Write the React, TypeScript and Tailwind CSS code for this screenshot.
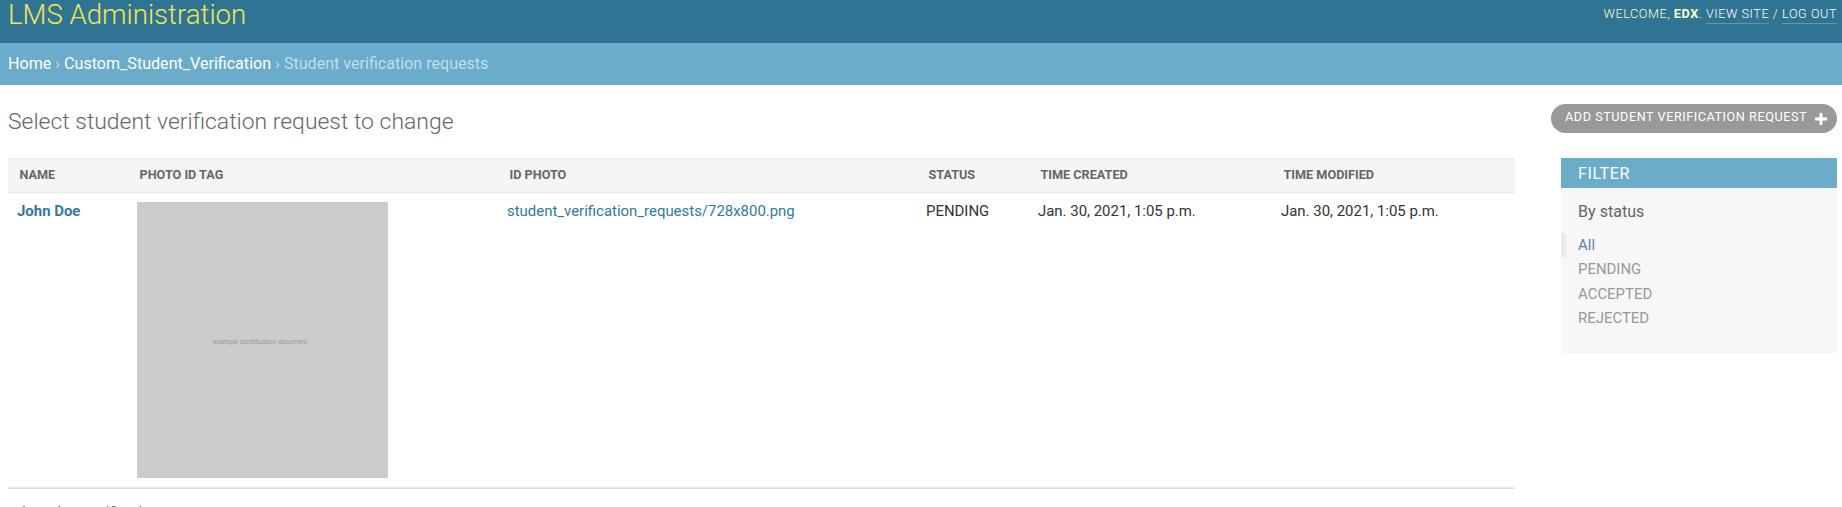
const columns = [
  { label: 'Name', width: 'w-[120px]' },
  { label: 'Photo ID tag', width: 'w-[370px]' },
  { label: 'ID photo', width: 'w-[419px]' },
  { label: 'Status', width: 'w-[112px]' },
  { label: 'Time created', width: 'w-[243px]' },
  { label: 'Time modified', width: 'w-[243px]' },
];

const filters = ['All', 'PENDING', 'ACCEPTED', 'REJECTED'];

const cell = 'border-b border-[#eaeaea] px-[9px] pt-[9px]';

function Header() {
  return (
    <header className="flex h-[43px] items-start justify-between bg-[#2f7493] pl-2 pr-[5px]">
      <h1 className="-mt-px text-[27.6px] leading-[32px] font-light text-[#f0e55a]">LMS Administration</h1>
      <div className="pt-[5px] text-[12.65px] leading-[18px] font-light tracking-[0.56px] whitespace-pre text-[#ffffcc] uppercase">
        Welcome, <strong className="font-bold">edx</strong>.{' '}
        <a className="inline-block h-[19px] border-b border-white/25 text-white">View site</a> /{' '}
        <a className="inline-block h-[19px] border-b border-white/25 text-white">Log out</a>
      </div>
    </header>
  );
}

function Breadcrumbs() {
  return (
    <nav className="flex h-[42px] items-center gap-1 bg-[#6aacca] pl-2 text-[16.08px] text-[#c4dce8]">
      <a className="text-white">Home</a>
      <span>›</span>
      <a className="text-white">Custom_Student_Verification</a>
      <span>›</span>
      <span>Student verification requests</span>
    </nav>
  );
}

function Results() {
  return (
    <div className="w-[1507px]">
      <table className="w-full table-fixed border-separate border-spacing-0">
        <thead>
          <tr className="h-[35px] bg-[#f5f5f5]">
            {columns.map((c) => (
              <th
                key={c.label}
                className={`${c.width} border-y border-[#eaeaea] px-[11.5px] pb-[2px] text-left text-[12.65px] leading-4 font-bold text-[#666] uppercase`}
              >
                {c.label}
              </th>
            ))}
          </tr>
        </thead>
        <tbody className="text-[14.95px] leading-[18px] text-[#333]">
          <tr className="h-[295px] align-top">
            <td className={`${cell} font-bold text-[#2f7b9c]`}>John Doe</td>
            <td className={cell}>
              <div className="flex h-[276px] w-[251px] items-center justify-center bg-[#ccc] pt-[3px] pr-[5px] font-['Liberation_Sans'] text-[6.6px] text-[#999]">
                example identification document
              </div>
            </td>
            <td className={`${cell} text-[#2f7b9c]`}>student_verification_requests/728x800.png</td>
            <td className={cell}>PENDING</td>
            <td className={cell}>Jan. 30, 2021, 1:05 p.m.</td>
            <td className={cell}>Jan. 30, 2021, 1:05 p.m.</td>
          </tr>
        </tbody>
      </table>
      <p className="border-t border-[#ddd] px-[11.5px] pt-[14px] text-[14.95px] leading-[18px] text-[#666]">
        1 student verification request
      </p>
    </div>
  );
}

function Filters() {
  return (
    <aside className="h-[195px] w-[276px] bg-[#f7f7f7]">
      <h2 className="h-[30px] bg-[#6aacca] pl-[17px] text-[16.1px] leading-[31px] tracking-[0.575px] text-white uppercase">
        Filter
      </h2>
      <h3 className="mt-[13px] pl-[17px] text-[16.1px] leading-[22px] text-[#666]">By status</h3>
      <ul className="mt-[10px] text-[14.95px] leading-[24px] text-[#999]">
        {filters.map((f) => (
          <li
            key={f}
            className={
              f === 'All'
                ? 'mb-[0.4px] h-6 border-l-[5px] border-[#eaeaea] pl-3 text-[#5b80b2]'
                : 'mb-[0.4px] h-6 pl-[17px]'
            }
          >
            {f}
          </li>
        ))}
      </ul>
    </aside>
  );
}

export default function App() {
  return (
    <div className="h-[507px] w-[1842px] overflow-hidden bg-white font-['Roboto',sans-serif]">
      <Header />
      <Breadcrumbs />
      <main className="pr-[5px] pl-2">
        <div className="flex h-[73px] items-start justify-between">
          <h1 className="mt-[23px] text-[22.95px] leading-[28px] font-light text-[#666]">
            Select student verification request to change
          </h1>
          <a className="mt-[19px] flex h-[29px] w-[286px] items-center rounded-full bg-[#999] pb-[2px] pl-[14px] text-[12.65px] tracking-[0.55px] whitespace-nowrap text-white uppercase">
            Add student verification request
            <svg className="mt-[2px] ml-[8px]" width="12" height="12" viewBox="0 0 12 12" fill="white">
              <path d="M4.5 0h3v4.5H12v3H7.5V12h-3V7.5H0v-3h4.5z" />
            </svg>
          </a>
        </div>
        <div className="flex items-start justify-between">
          <Results />
          <Filters />
        </div>
      </main>
    </div>
  );
}
